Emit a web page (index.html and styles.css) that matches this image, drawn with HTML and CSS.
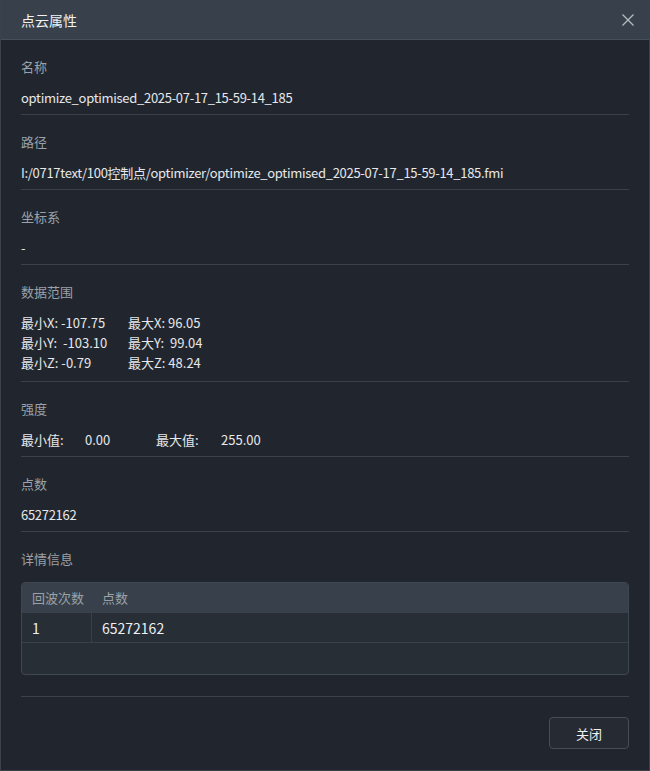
FILE: index.html
```html
<!DOCTYPE html>
<html lang="zh-CN">
<head>
<meta charset="utf-8">
<title>点云属性</title>
<link rel="stylesheet" href="styles.css">
</head>
<body>
<div class="dialog">
  <div class="header">
    <span class="title">点云属性</span>
    <svg class="close" width="14" height="14" viewBox="0 0 14 14"><path d="M1.5 1.5L12.5 12.5M12.5 1.5L1.5 12.5" stroke="#b4bac1" stroke-width="1.3" fill="none"/></svg>
  </div>
  <div class="body">
    <div class="section">
      <div class="label">名称</div>
      <div class="value">optimize_optimised_2025-07-17_15-59-14_185</div>
    </div>
    <div class="section">
      <div class="label">路径</div>
      <div class="value">I:/0717text/100控制点/optimizer/optimize_optimised_2025-07-17_15-59-14_185.fmi</div>
    </div>
    <div class="section">
      <div class="label">坐标系</div>
      <div class="value">-</div>
    </div>
    <div class="section">
      <div class="label">数据范围</div>
      <div class="range">
        <span>最小X: -107.75</span><span>最大X: 96.05</span>
        <span>最小Y:&nbsp; -103.10</span><span>最大Y:&nbsp; 99.04</span>
        <span>最小Z: -0.79</span><span>最大Z: 48.24</span>
      </div>
    </div>
    <div class="section">
      <div class="label">强度</div>
      <div class="intensity">
        <span class="ik">最小值:</span><span class="iv">0.00</span>
        <span class="ik">最大值:</span><span class="iv">255.00</span>
      </div>
    </div>
    <div class="section">
      <div class="label">点数</div>
      <div class="value">65272162</div>
    </div>
    <div class="section last">
      <div class="label">详情信息</div>
      <div class="table">
        <div class="row head">
          <div class="c1">回波次数</div>
          <div class="c2">点数</div>
        </div>
        <div class="row data">
          <div class="c1">1</div>
          <div class="c2">65272162</div>
        </div>
        <div class="filler"></div>
      </div>
    </div>
    <div class="footer">
      <button class="btn">关闭</button>
    </div>
  </div>
</div>
</body>
</html>
```

FILE: styles.css
```css
* { box-sizing: border-box; }
html, body {
  margin: 0;
  padding: 0;
  background: #21262e;
}
body {
  width: 650px;
  height: 771px;
  font-family: "Noto Sans CJK SC", "Noto Sans", sans-serif;
  font-size: 13px;
  color: #e6e8eb;
}
.dialog {
  width: 650px;
  height: 771px;
  border: 1px solid #3a424c;
  border-top: none;
  background: #21262e;
  display: flex;
  flex-direction: column;
}
.header {
  height: 40px;
  background: #38414b;
  border-bottom: 1px solid #465059;
  display: flex;
  align-items: center;
  justify-content: space-between;
  padding: 0 14px 0 20px;
  flex-shrink: 0;
}
.title {
  font-size: 14px;
  color: #f0f2f4;
  line-height: 20px;
}
.close { display: block; }
.body {
  padding: 0 20px;
  flex: 1;
  display: flex;
  flex-direction: column;
}
.section {
  border-bottom: 1px solid #3a414a;
  padding: 17px 0 6px;
  flex-shrink: 0;
}
.label {
  color: #9ba1a8;
  line-height: 20px;
  height: 20px;
  margin-bottom: 11px;
}
.value {
  line-height: 20px;
  height: 20px;
  white-space: nowrap;
  letter-spacing: -0.3px;
}
.range {
  display: grid;
  grid-template-columns: 107px auto;
  line-height: 20px;
  padding-bottom: 2px;
}
.intensity {
  display: grid;
  grid-template-columns: 64px 71px 65px auto;
  line-height: 20px;
}
.section.last {
  padding-bottom: 21px;
}
.table {
  border: 1px solid #3f4751;
  border-radius: 4px;
  overflow: hidden;
  background: #282e36;
  margin-top: 13px;
}
.row {
  display: flex;
  height: 30px;
  line-height: 30px;
}
.row.head {
  background: #38414b;
  color: #9ba1a8;
}
.row.data {
  border-bottom: 1px solid #3a414a;
  font-size: 14px;
  color: #eef0f2;
}
.c1 {
  width: 70px;
  padding-left: 10px;
  border-right: 1px solid #3a414a;
}
.c2 {
  flex: 1;
  padding-left: 10px;
}
.filler { height: 31px; }
.footer {
  display: flex;
  justify-content: flex-end;
  padding-top: 20px;
}
.btn {
  width: 80px;
  height: 32px;
  background: #262b33;
  border: 1px solid #454d57;
  border-radius: 4px;
  color: #eef0f2;
  font-family: "Noto Sans CJK SC", sans-serif;
  font-size: 13px;
  padding: 0;
}
```
